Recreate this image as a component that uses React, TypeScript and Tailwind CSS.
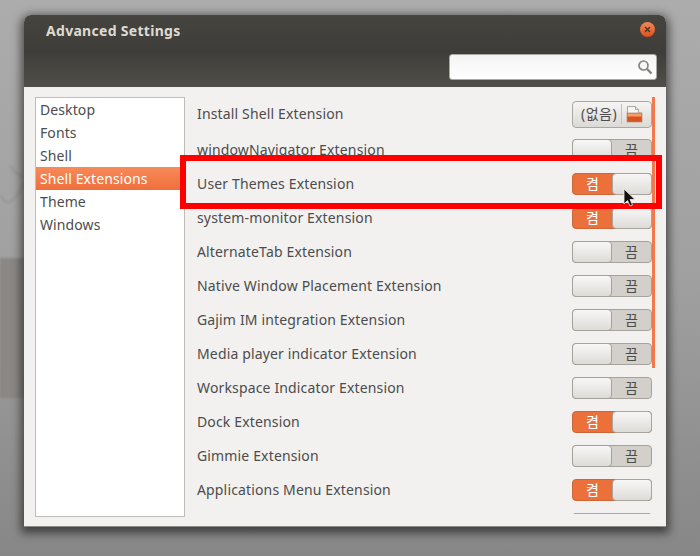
import React from 'react';

const sidebarItems = ['Desktop', 'Fonts', 'Shell', 'Shell Extensions', 'Theme', 'Windows'];

const extensions: { name: string; on: boolean }[] = [
  { name: 'windowNavigator Extension', on: false },
  { name: 'User Themes Extension', on: true },
  { name: 'system-monitor Extension', on: true },
  { name: 'AlternateTab Extension', on: false },
  { name: 'Native Window Placement Extension', on: false },
  { name: 'Gajim IM integration Extension', on: false },
  { name: 'Media player indicator Extension', on: false },
  { name: 'Workspace Indicator Extension', on: false },
  { name: 'Dock Extension', on: true },
  { name: 'Gimmie Extension', on: false },
  { name: 'Applications Menu Extension', on: true },
];

const Switch: React.FC<{ on: boolean }> = ({ on }) => {
  if (on) {
    return (
      <div className="flex h-[22px] w-[80px] rounded-[4px] border border-[#c9673a] bg-[#ec7039]">
        <span className="flex-1 text-center text-[14px] leading-[20px] text-white">켬</span>
        <div className="-my-px -mr-px w-[40px] rounded-[4px] border border-[#a8a59e] bg-gradient-to-b from-[#f8f7f6] to-[#dedcd8]" />
      </div>
    );
  }
  return (
    <div className="flex h-[22px] w-[80px] rounded-[4px] border border-[#a5a29b] bg-[#d3d0cb]">
      <div className="-my-px -ml-px w-[40px] rounded-[4px] border border-[#a5a29b] bg-gradient-to-b from-[#f8f7f6] to-[#dedcd8]" />
      <span className="flex-1 text-center text-[14px] leading-[20px] text-[#4c4c4c]">끔</span>
    </div>
  );
};

const FileButton = () => (
  <div className="flex h-[27px] w-[80px] items-center rounded-[4px] border border-[#aaa8a2] bg-gradient-to-b from-[#f6f5f4] to-[#dcdad6] pl-[8px]">
    <span className="text-[14px] leading-none tracking-[0.5px] text-[#4c4c4c]">(없음)</span>
    <div className="ml-[4px] h-[20px] w-px bg-[#c4c2bc]" />
    <svg width="17" height="17" viewBox="0 0 17 17" className="ml-[4px]">
      <path d="M1.500 9V.500h8l3 3V7h3v2" fill="#f6f5f2" stroke="#aaa8a2" />
      <path d="M9.500.500v3h3" fill="#e4e2dd" stroke="#aaa8a2" />
      <rect x="1" y="7" width="15" height="9" fill="#d9521f" stroke="#b98a6e" strokeWidth="0.700" />
      <rect x="1.500" y="7.500" width="14" height="3" fill="#f2a06a" />
    </svg>
  </div>
);

export default function App() {
  return (
    <div
      className="relative h-[556px] w-[700px] overflow-hidden bg-gradient-to-b from-[#acacac] via-[#a0a0a0] to-[#878787] pl-[24px] pt-[15px]"
      style={{ fontFamily: '"Noto Sans", "Noto Sans CJK KR", sans-serif' }}
    >
      {/* wallpaper bits showing left of the window */}
      <div className="absolute left-0 top-[258px] h-[140px] w-[24px] bg-[#8a8784] blur-[1px]" />
      <svg width="24" height="50" viewBox="0 0 24 50" className="absolute left-0 top-[165px] blur-[1px]" fill="none" stroke="#979797" strokeWidth="2">
        <path d="M0 30c6 12 14 10 24-12M10 0c3 6 8 10 14 12" />
      </svg>

      <div className="relative flex h-[512px] w-[642px] flex-col rounded-t-[7px] border-b border-[#8f8d87] bg-[#f2f1ef] shadow-[0_3px_10px_3px_rgba(0,0,0,0.55)]">
        <div className="relative h-[72px] rounded-t-[7px] bg-gradient-to-b from-[#45443f] via-[#3e3d39] to-[#514f49]">
          <div className="pl-[22px] pt-[6px] text-[14px] font-bold leading-[20px] tracking-[0.3px] text-[#dfdbd2]">
            Advanced Settings
          </div>
          <div className="absolute right-[11px] top-[7px] flex h-[15px] w-[15px] items-center justify-center rounded-full bg-gradient-to-b from-[#f08a55] to-[#d9501e]">
            <svg width="7" height="7" viewBox="0 0 7 7">
              <path d="M1 1l5 5M6 1L1 6" stroke="#4a3020" strokeWidth="1.200" />
            </svg>
          </div>
          <div className="absolute left-[425px] top-[39px] flex h-[26px] w-[208px] items-center justify-end rounded-[3px] border border-[#aaa9a4] bg-gradient-to-b from-[#f4f4f4] to-[#ffffff] pr-[3px]">
            <svg width="16" height="16" viewBox="0 0 16 16" fill="none" stroke="#85857f">
              <circle cx="6.500" cy="6.500" r="4.500" strokeWidth="1.700" />
              <path d="M10 10l4.500 4.500" strokeWidth="2.400" />
            </svg>
          </div>
        </div>

        <div className="relative flex flex-1 pl-[11px] pt-[10px]">
          <div className="h-[420px] w-[150px] border border-[#bfbdb8] bg-white">
            {sidebarItems.map(item => (
              <div
                key={item}
                className={
                  item === 'Shell Extensions'
                    ? 'h-[23px] bg-gradient-to-b from-[#f78a58] to-[#ee6f3d] pl-[4px] text-[14px] leading-[23px] tracking-[0.1px] text-white'
                    : 'h-[23px] pl-[4px] text-[14px] leading-[23px] tracking-[0.1px] text-[#4c4c4c]'
                }
              >
                {item}
              </div>
            ))}
          </div>

          <div className="ml-[12px] w-[455px]">
            <div className="mb-[2px] flex h-[34px] items-center justify-between">
              <span className="-mt-[2px] text-[14px] tracking-[0.15px] text-[#4c4c4c]">Install Shell Extension</span>
              <FileButton />
            </div>
            {extensions.map(ext => (
              <div key={ext.name} className="flex h-[34px] items-center justify-between">
                <span className="-mt-[2px] text-[14px] tracking-[0.15px] text-[#4c4c4c]">{ext.name}</span>
                <Switch on={ext.on} />
              </div>
            ))}
            <div className="ml-[377px] mt-[6px] h-px w-[76px] bg-[#a9a7a2]" />
          </div>

          <div className="absolute left-[628px] top-[10px] h-[271px] w-[3px] bg-[#f3794a]" />
        </div>
      </div>

      {/* annotation drawn over the screenshot */}
      <div className="absolute left-[180px] top-[155px] h-[54px] w-[482px] border-[6px] border-[#ff0000]" />
      <svg width="16" height="20" viewBox="0 0 16 20" className="absolute left-[623px] top-[188px]">
        <path d="M1 1v15l3.500-3.500 2.500 5.500 2.500-1-2.500-5.500h5z" fill="#111" stroke="#eee" strokeWidth="0.800" />
      </svg>
    </div>
  );
}
